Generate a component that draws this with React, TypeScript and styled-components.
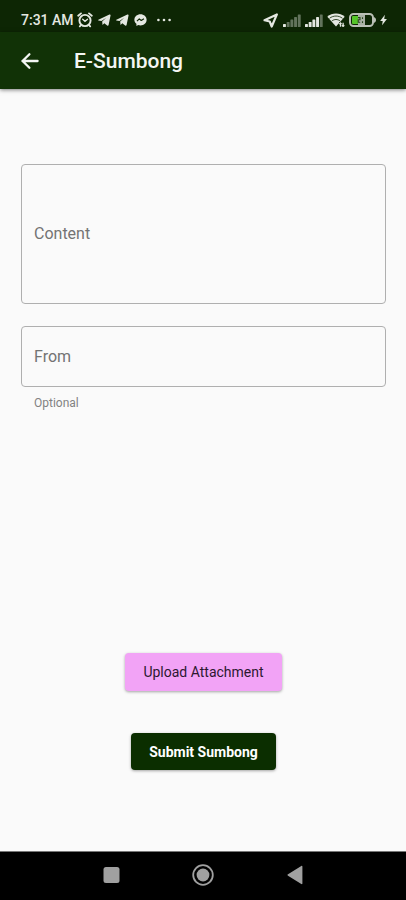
import React from "react";
import styled, { createGlobalStyle, css } from "styled-components";

const GlobalStyle = createGlobalStyle`
  *, *::before, *::after { box-sizing: border-box; }
  body { margin: 0; background: #fafafa; font-family: Roboto, sans-serif; }
  button, input, textarea { font-family: inherit; }
`;

const Screen = styled.div`
  min-height: 100vh;
  display: flex;
  flex-direction: column;
  background: #fafafa;
`;

const StatusBar = styled.div`
  display: flex;
  align-items: center;
  justify-content: space-between;
  height: 32px;
  padding: 8px 19px 0 21px;
  background: #0d2604;
  color: #e4e8e1;
`;

const StatusGroup = styled.div<{ $gap: number }>`
  display: flex;
  align-items: center;
  gap: ${({ $gap }) => $gap}px;

  svg { display: block; }
`;

const Clock = styled.time`
  font-size: 14px;
  line-height: 16px;
  font-weight: 500;
  margin-right: -2px;
`;

const AppBar = styled.header`
  display: flex;
  align-items: center;
  gap: 32px;
  height: 57px;
  padding: 0 18px;
  background: #113206;
  color: #f4f6f3;
  box-shadow: 0 1px 4px rgba(0, 0, 0, 0.5);
`;

const BackButton = styled.button`
  display: flex;
  padding: 0;
  border: 0;
  background: none;
  color: inherit;
  cursor: pointer;
`;

const Title = styled.h1`
  margin: 0;
  font-size: 21px;
  line-height: 24px;
  font-weight: 500;
`;

const Form = styled.form`
  flex: 1;
  display: flex;
  flex-direction: column;
  padding: 75px 20px 81px 21px;
`;

const Fields = styled.div`
  display: flex;
  flex-direction: column;
  gap: 22px;
`;

const Field = styled.div`
  display: grid;
  align-items: center;
`;

const fieldBox = css`
  grid-area: 1 / 1;
  width: 100%;
  margin: 0;
  padding: 12px;
  border: 1px solid #afafaf;
  border-radius: 4px;
  background: transparent;
  color: #212121;
  font-size: 16px;
  line-height: 24px;
  resize: none;

  &:focus { outline: 2px solid #113206; outline-offset: -2px; }
  &:not(:placeholder-shown) + label { visibility: hidden; }
`;

const TextArea = styled.textarea`
  ${fieldBox}
  display: block;
  height: 140px;
`;

const TextInput = styled.input`
  ${fieldBox}
  height: 61px;
`;

const FieldLabel = styled.label`
  grid-area: 1 / 1;
  justify-self: start;
  padding-left: 13px;
  font-size: 16px;
  line-height: 24px;
  color: #737373;
  pointer-events: none;
`;

const Helper = styled.p`
  margin: 8px 0 0 13px;
  font-size: 12px;
  line-height: 16px;
  color: #828282;
`;

const Actions = styled.div`
  display: flex;
  flex-direction: column;
  align-items: center;
  gap: 42px;
  margin-top: auto;
`;

const ActionButton = styled.button<{ $primary?: boolean }>`
  height: ${({ $primary }) => ($primary ? 37 : 38)}px;
  padding: 0 18px;
  border: 0;
  border-radius: 4px;
  background: ${({ $primary }) => ($primary ? "#0b2e00" : "#f2a3f6")};
  color: ${({ $primary }) => ($primary ? "#ffffff" : "#2c1830")};
  font-size: 14px;
  line-height: 20px;
  font-weight: ${({ $primary }) => ($primary ? 700 : 400)};
  box-shadow: 0 1px 3px rgba(0, 0, 0, 0.35);
  cursor: pointer;
`;

const NavBar = styled.nav`
  display: flex;
  align-items: center;
  justify-content: center;
  gap: 68px;
  height: 49px;
  padding-bottom: 2px;
  border-top: 1px solid #777777;
  background: #000000;
  color: #a0a0a0;
`;

const NavButton = styled.button`
  display: flex;
  padding: 0;
  border: 0;
  background: none;
  color: inherit;
  cursor: pointer;
`;

const AlarmIcon = () => (
  <svg width="16" height="16" viewBox="0 0 16 16" fill="none" stroke="currentColor" strokeLinecap="round">
    <circle cx="8" cy="8.5" r="5.6" strokeWidth="1.9" />
    <path d="M1.2 3.7 4 1.4M14.8 3.7 12 1.4M3.8 13l-1 1.4M12.2 13l1 1.4" strokeWidth="1.8" />
    <path d="M5.7 7.2 8 9.3l2.5-2" strokeWidth="1.4" />
  </svg>
);

const TelegramIcon = () => (
  <svg width="13" height="14" viewBox="0 0 14 14" fill="currentColor">
    <path d="M.4 6.8 12.3 1.1c.8-.4 1.4.1 1.2 1l-2.1 10.4c-.2.8-.9 1-1.5.5L6.8 10.4l-1.9 1.9-.4-3.7 4.4-3.9-5.2 3.4-3.2-.6c-.6-.2-.6-.5-.1-.7Z" />
  </svg>
);

const MessengerIcon = () => (
  <svg width="13" height="14" viewBox="0 0 14 14">
    <path d="M7 .7C3.3.7.4 3.3.4 6.7c0 1.8.8 3.3 2.2 4.4v2.3l2-.9c.8.2 1.6.3 2.4.3 3.7 0 6.6-2.6 6.6-6.1C13.6 3.3 10.7.7 7 .7Z" fill="currentColor" />
    <path d="m3.2 8.2 2.5-2.4 2.1 1.7 2.9-1.8" fill="none" stroke="#0d2604" strokeWidth="1.3" strokeLinejoin="round" />
  </svg>
);

const DotsIcon = () => (
  <svg width="14" height="14" viewBox="0 0 14 14" fill="currentColor">
    <circle cx="1.4" cy="7" r="1.3" />
    <circle cx="7" cy="7" r="1.3" />
    <circle cx="12.6" cy="7" r="1.3" />
  </svg>
);

const LocationIcon = () => (
  <svg width="16" height="15" viewBox="0 0 16 15" fill="none" stroke="currentColor" strokeWidth="2.2" strokeLinejoin="round">
    <path d="M13.9 1.4 1.5 7.3l5.2 1.2 2 5Z" />
  </svg>
);

const SignalIcon = ({ level }: { level: number }) => (
  <svg width="18" height="13" viewBox="0 0 18 13" fill="currentColor">
    {[3, 5, 7.5, 10, 12.5].map((height, index) => (
      <rect
        key={height}
        x={index * 3.7}
        y={13 - height}
        width="2.9"
        height={height}
        rx=".6"
        opacity={index < level ? 1 : 0.4}
      />
    ))}
  </svg>
);

const WifiIcon = () => (
  <svg width="18" height="14" viewBox="0 0 18 14">
    <path d="M9 .5C5.7.5 2.8 1.6.3 3.7L9 13.4l8.7-9.7C15.2 1.6 12.3.5 9 .5Z" fill="currentColor" />
    <path d="M2.5 5.3c3.8-3 9.2-3 13 0M4.8 8c2.6-2 5.8-2 8.4 0" fill="none" stroke="#0d2604" strokeWidth=".8" />
    <path d="M12 9.2h6V14h-6z" fill="#0d2604" />
    <path d="M13.5 13.7V9.9m-1.2 1.3 1.2-1.3 1 1.3m1.6-1.5v3.7m-1.2-1.2 1.2 1.2 1.2-1.2" fill="none" stroke="currentColor" strokeWidth="1.3" />
  </svg>
);

const BatteryIcon = () => (
  <svg width="27" height="14" viewBox="0 0 27 14">
    <rect x="1" y="1" width="23" height="12" rx="3.5" fill="#0d2604" stroke="#bac0b6" strokeWidth="2" />
    <path d="M25 4.2c1.3.3 2 1.4 2 2.8s-.7 2.5-2 2.8Z" fill="#bac0b6" />
    <path d="M4 3h5v8H4a1 1 0 0 1-1-1V4a1 1 0 0 1 1-1Z" fill="#55c629" />
    <path d="M9 2h7v10H9z" fill="#a9b1a5" />
    <path d="M9 4.6h2v2.2H9.2v2.5h2M13.5 4.2V6M13.5 8.2V10" fill="none" stroke="#29491c" strokeWidth="1.1" />
  </svg>
);

const BoltIcon = () => (
  <svg width="7" height="12" viewBox="0 0 8 12" fill="currentColor">
    <path d="M5.6 0 .2 7h2.9l-.7 5 5.5-7.1H4.8Z" />
  </svg>
);

const BackIcon = () => (
  <svg width="24" height="24" viewBox="0 0 24 24" fill="none" stroke="currentColor" strokeWidth="2.3" strokeLinecap="round">
    <path d="M19.6 12H5M11.4 5.2 4.6 12l6.8 6.8" />
  </svg>
);

export default function App() {
  return (
    <Screen>
      <GlobalStyle />
      <StatusBar>
        <StatusGroup $gap={5}>
          <Clock>7:31 AM</Clock>
          <AlarmIcon />
          <TelegramIcon />
          <TelegramIcon />
          <MessengerIcon />
          <span />
          <DotsIcon />
        </StatusGroup>
        <StatusGroup $gap={4}>
          <LocationIcon />
          <SignalIcon level={1} />
          <SignalIcon level={4} />
          <WifiIcon />
          <BatteryIcon />
          <BoltIcon />
        </StatusGroup>
      </StatusBar>
      <AppBar>
        <BackButton type="button" aria-label="Back">
          <BackIcon />
        </BackButton>
        <Title>E-Sumbong</Title>
      </AppBar>
      <Form onSubmit={(event) => event.preventDefault()}>
        <Fields>
          <Field>
            <TextArea id="content" placeholder=" " />
            <FieldLabel htmlFor="content">Content</FieldLabel>
          </Field>
          <div>
            <Field>
              <TextInput id="from" type="text" placeholder=" " aria-describedby="from-help" />
              <FieldLabel htmlFor="from">From</FieldLabel>
            </Field>
            <Helper id="from-help">Optional</Helper>
          </div>
        </Fields>
        <Actions>
          <ActionButton type="button">Upload Attachment</ActionButton>
          <ActionButton type="submit" $primary>Submit Sumbong</ActionButton>
        </Actions>
      </Form>
      <NavBar>
        <NavButton type="button" aria-label="Recent apps">
          <svg width="24" height="24" viewBox="0 0 24 24" fill="currentColor">
            <rect x="4.5" y="4" width="16" height="16" rx="2.5" />
          </svg>
        </NavButton>
        <NavButton type="button" aria-label="Home">
          <svg width="24" height="24" viewBox="0 0 24 24" fill="currentColor">
            <circle cx="12" cy="12" r="9.8" fill="none" stroke="currentColor" strokeWidth="1.8" />
            <circle cx="12" cy="12" r="6.4" />
          </svg>
        </NavButton>
        <NavButton type="button" aria-label="Previous screen">
          <svg width="24" height="24" viewBox="0 0 24 24" fill="currentColor">
            <path d="M19.4 3.6v16.8c0 .7-.5.9-1.1.6L5 12.7c-.7-.4-.7-1 0-1.4L18.3 3c.6-.3 1.1-.1 1.1.6Z" />
          </svg>
        </NavButton>
      </NavBar>
    </Screen>
  );
}
